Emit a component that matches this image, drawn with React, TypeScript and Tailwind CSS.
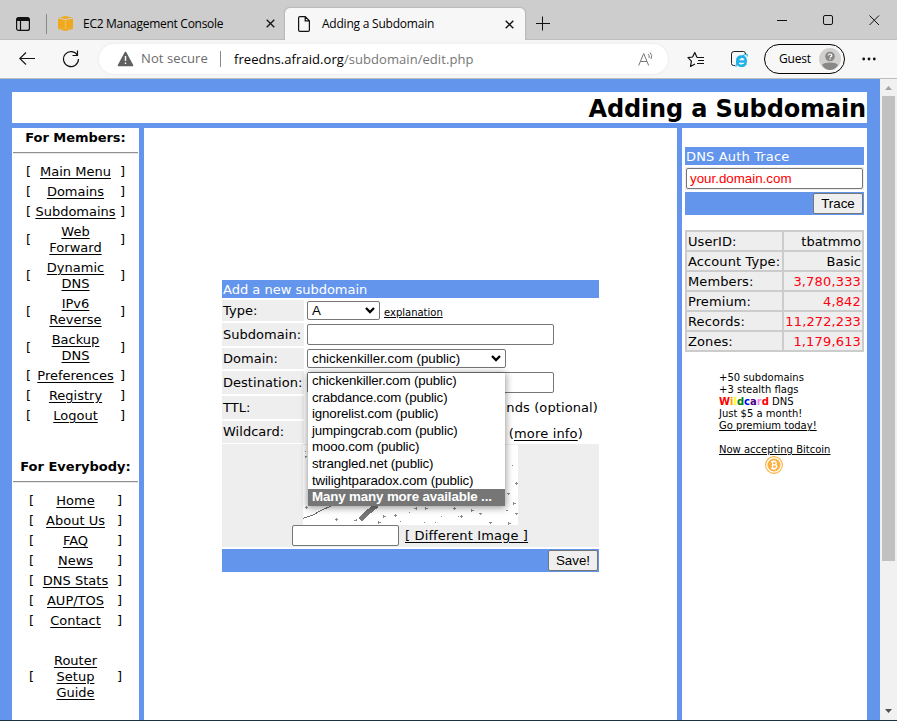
import React from "react";

type Entry = { lines: string[]; height: string };

const members: Entry[] = [
  { lines: ["Main Menu"], height: "h-[20px]" },
  { lines: ["Domains"], height: "h-[20px]" },
  { lines: ["Subdomains"], height: "h-[20px]" },
  { lines: ["Web", "Forward"], height: "h-[36px]" },
  { lines: ["Dynamic", "DNS"], height: "h-[36px]" },
  { lines: ["IPv6", "Reverse"], height: "h-[36px]" },
  { lines: ["Backup", "DNS"], height: "h-[36px]" },
  { lines: ["Preferences"], height: "h-[20px]" },
  { lines: ["Registry"], height: "h-[20px]" },
  { lines: ["Logout"], height: "h-[20px]" },
];

const everybody: Entry[] = [
  { lines: ["Home"], height: "h-[20px]" },
  { lines: ["About Us"], height: "h-[20px]" },
  { lines: ["FAQ"], height: "h-[20px]" },
  { lines: ["News"], height: "h-[20px]" },
  { lines: ["DNS Stats"], height: "h-[20px]" },
  { lines: ["AUP/TOS"], height: "h-[20px]" },
  { lines: ["Contact"], height: "h-[20px]" },
  { lines: ["Router", "Setup", "Guide"], height: "h-[52px] mt-[20px]" },
];

const stats: [string, string, string][] = [
  ["UserID:", "tbatmmo", "text-black"],
  ["Account Type:", "Basic", "text-black"],
  ["Members:", "3,780,333", "text-[#ff0010] tracking-[0.16px]"],
  ["Premium:", "4,842", "text-[#ff0010] tracking-[0.16px]"],
  ["Records:", "11,272,233", "text-[#ff0010] tracking-[0.12px]"],
  ["Zones:", "1,179,613", "text-[#ff0010] tracking-[0.16px]"],
];

const options = [
  "chickenkiller.com (public)",
  "crabdance.com (public)",
  "ignorelist.com (public)",
  "jumpingcrab.com (public)",
  "mooo.com (public)",
  "strangled.net (public)",
  "twilightparadox.com (public)",
];

function Menu({ entries, width }: { entries: Entry[]; width: string }) {
  return (
    <div className={`mx-auto ${width}`}>
      {entries.map((e) => (
        <div key={e.lines[0]} className={`flex items-center justify-between ${e.height}`}>
          <span>[</span>
          <span className="flex flex-col items-center underline underline-offset-2">
            {e.lines.map((l) => (
              <span key={l} className="h-[16px] leading-[16px]">{l}</span>
            ))}
          </span>
          <span>]</span>
        </div>
      ))}
    </div>
  );
}

function Rule() {
  return <div className="mx-[1px] h-[2px] border-t border-[#8f8f8f] bg-[#e8e8e8]" />;
}

function Chevron() {
  return (
    <svg width="10" height="7" viewBox="0 0 10 7" fill="none" stroke="#000" strokeWidth="2.3">
      <path d="M1 1L5 5L9 1" />
    </svg>
  );
}

function Field({ label, height, children }: { label: string; height: string; children?: React.ReactNode }) {
  return (
    <div className={`flex gap-[3px] ${height}`}>
      <div className="flex w-[82px] items-center bg-[#eee] pl-[1px] tracking-[0.03px]">{label}</div>
      <div className="flex flex-1 items-center">{children}</div>
    </div>
  );
}

function TabBar() {
  return (
    <div className="flex h-[40px] bg-[#cdcdcd] font-['Open_Sans',sans-serif] text-[12px]">
      <div className="flex w-[285px] items-center border-b border-[#bdbdbd] pt-[8px] pl-[16px]">
        <svg width="14" height="14" viewBox="0 0 14 14" fill="none" stroke="#111">
          <rect x=".6" y=".6" width="12.8" height="12.8" rx="2" strokeWidth="1.2" />
          <path d="M1 2.4H13" strokeWidth="3.2" />
          <path d="M4.5 3V13" strokeWidth="1.2" />
        </svg>
        <div className="ml-[16px] h-[20px] w-px bg-[#888]" />
        <svg className="ml-[11px]" width="15" height="15" viewBox="0 0 15 15">
          <path d="M0 2.6L7 4V12L0 13Z" fill="#f0a91d" />
          <path d="M15 2.6L8 4V12L15 13Z" fill="#f0a91d" />
          <path d="M1 1.6L7.5 0L14 1.6L7.5 3Z" fill="#f0a91d" />
          <path d="M0 13L7.5 12L15 13L7.5 15Z" fill="#f0a91d" />
          <path d="M6.8 3.5H8.2V12.5H6.8Z" fill="#f5bd50" />
        </svg>
        <span className="ml-[10px] w-[150px] whitespace-nowrap tracking-[-0.28px]">EC2 Management Console</span>
        <svg className="ml-[33px]" width="9" height="9" viewBox="0 0 9 9" stroke="#111" strokeWidth="1.3">
          <path d="M.7.7L8.3 8.3M8.3.7L.7 8.3" />
        </svg>
      </div>
      <div className="mt-[8px] flex h-[32px] w-[240px] items-center rounded-t-[5px] bg-[#f7f7f7] pl-[13px] shadow-[0_0_2px_#888]">
        <svg width="12" height="16" viewBox="0 0 12 16" fill="none" stroke="#111" strokeWidth="1.2">
          <path d="M2 .6H7.2L11.4 4.8V14Q11.4 15.4 10 15.4H2Q.6 15.4 .6 14V2Q.6 .6 2 .6ZM7.2 .6V4.8H11.4" />
        </svg>
        <span className="ml-[12px] w-[130px] whitespace-nowrap tracking-[-0.22px]">Adding a Subdomain</span>
        <svg className="ml-[53px]" width="9" height="9" viewBox="0 0 9 9" stroke="#111" strokeWidth="1.3">
          <path d="M.7.7L8.3 8.3M8.3.7L.7 8.3" />
        </svg>
      </div>
      <div className="flex flex-1 border-b border-[#bdbdbd]">
        <svg className="mt-[16px] ml-[11px]" width="14" height="15" viewBox="0 0 14 15" stroke="#111" strokeWidth="1">
          <path d="M0 7.5H14M6.5 .5V14.5" />
        </svg>
        <svg className="mt-[15px] ml-[227px]" width="56" height="11" viewBox="0 0 56 11" fill="none" stroke="#111">
          <path d="M0 5.5H10" />
          <rect x="46.5" y=".5" width="9" height="9" rx="1.5" />
        </svg>
        <svg className="mt-[15px] ml-[36px]" width="11" height="11" viewBox="0 0 11 11" stroke="#111">
          <path d="M.5 .5L10 10M10 .5L.5 10" />
        </svg>
      </div>
    </div>
  );
}

function Toolbar() {
  return (
    <div className="flex h-[39px] items-center border-b border-[#bdbdbd] bg-[#f7f7f7] font-['Open_Sans',sans-serif] text-[13px]">
      <svg className="ml-[19px]" width="16" height="14" viewBox="0 0 16 14" fill="none" stroke="#111" strokeWidth="1.1">
        <path d="M7 .5L.8 6.5L7 12.5M.8 6.5H16" />
      </svg>
      <svg className="ml-[27px]" width="18" height="18" viewBox="0 0 18 18" fill="none" stroke="#111" strokeWidth="1.2">
        <path d="M15.6 5.5A7.5 7.5 0 1 0 16.5 9M15.5 .5V5.5H10.5" />
      </svg>
      <div className="ml-[19px] flex h-[30px] w-[569px] items-center rounded-full bg-white pl-[18px] shadow-[0_0_3px_#e4e4e4]">
        <svg width="17" height="16" viewBox="0 0 17 16">
          <path d="M8.5 1.5L15.5 14.5H1.5Z" fill="#606060" stroke="#606060" strokeWidth="1.6" strokeLinejoin="round" />
          <path d="M8.5 5V10M8.5 11.5V13" stroke="#fff" strokeWidth="1.4" />
        </svg>
        <span className="ml-[7px] w-[67px] whitespace-nowrap tracking-[0.1px] text-[#6b6b6b]">Not secure</span>
        <div className="ml-[12px] h-[16px] w-px bg-[#888]" />
        <span className="ml-[13px] w-[241px] pt-[1px] whitespace-nowrap tracking-[0.06px] text-[#767676]"><span className="text-black">freedns.afraid.org</span>/subdomain/edit.php</span>
        <svg className="ml-[163px]" width="16" height="15" viewBox="0 0 16 15" fill="none" stroke="#777">
          <path d="M.7 13.5L5.7 1.5L10.7 13.5M2.5 9.5H9M10 2Q12 3.5 11 6M12 .5Q15 3.5 13 7" />
        </svg>
      </div>
      <svg className="ml-[19px]" width="17" height="17" viewBox="0 0 17 17" fill="none" stroke="#111" strokeWidth="1.2" strokeLinejoin="round">
        <path d="M10 6.5L7.8 1.5L5.6 6L1 6.7L4.4 10.2L3.5 15.5L8 13M10 6.5H17M11 9.5H17M10 12.5H17" />
      </svg>
      <svg className="ml-[27px]" width="17" height="17" viewBox="0 0 17 17" fill="none">
        <path d="M4 14.5H2.7Q.5 14.5 .5 12.5V3Q.5 .5 3 .5H12.5Q14.5 .5 14.5 3" stroke="#222" />
        <path d="M14.8 12Q13.8 14.8 10.4 14.8Q6.2 14.8 6.2 10.2Q6.2 5.6 10.4 5.6Q14.8 5.6 14.8 10.4H7" stroke="#1fb2ea" strokeWidth="2.5" />
        <path d="M5 16Q4.5 10 13 4Q17 2 16 5.5" stroke="#1fb2ea" strokeWidth="1.2" />
      </svg>
      <div className="ml-[16px] flex h-[30px] w-[81px] items-center rounded-full border border-black pl-[14px]">
        <span className="w-[33px] whitespace-nowrap text-[12px] tracking-[-0.2px]">Guest</span>
        <svg className="ml-[7px]" width="22" height="22" viewBox="0 0 22 22">
          <circle cx="11" cy="11" r="11" fill="#d2d0ce" />
          <path d="M3 17Q4 14.5 11 14.5Q18 14.5 19 17Q16 22 11 22Q6 22 3 17Z" fill="#8a8886" />
          <circle cx="11" cy="8.5" r="4.8" fill="#8a8886" />
          <path d="M9.2 7.4Q9.5 6 11 6Q12.8 6 12.8 7.5Q12.8 8.3 11 9.3M11 10.3V11.5" fill="none" stroke="#fff" strokeWidth="1.2" />
        </svg>
      </div>
      <svg className="ml-[17px]" width="14" height="4" viewBox="0 0 14 4" fill="#111">
        <circle cx="1.7" cy="2" r="1.4" /><circle cx="7" cy="2" r="1.4" /><circle cx="12.3" cy="2" r="1.4" />
      </svg>
    </div>
  );
}

function Captcha() {
  return (
    <svg className="ml-[81px] block" width="215" height="80" viewBox="0 0 215 80" shapeRendering="crispEdges">
      <rect width="215" height="80" fill="#fff" />
      <g fill="none" stroke="#6e6e6e">
        <path d="M0 73.5L10 70L18 65.5L28 61" />
        <path d="M57 75L64 68L74 60" stroke="#777" strokeWidth="5" />
        <path
          stroke="#8a8a8a"
          d="M2 6.5H3M2 11.5H4M2.5 11V13M2 62.5H5M3.5 61V64M32 74.5H35M33.5 73V76M51 75.5H54M53.5 74V76M75 77.5H78M75.5 76V79M80 71.5H83M80.5 70V73M91 70.5H94M92.5 69V72M97 76.5H98M106 67.5H107M111 63.5H114M113.5 62V65M121 77.5H122M132 77.5H133M138 71.5H139M122 63.5H125M122.5 62V65M150 63.5H153M151.5 62V65M157 71.5H160M158.5 70V73M155 71.5H156M168 65.5H171M168.5 64V67M176 68.5H179M177.5 68V70M186 77.5H189M187.5 77V79M205 78.5H208M205.5 77V80M210 58.5H213M210.5 57V60M204 48.5H207M205.5 48V50M212 38.5H215M213.5 37V40M209 20.5H210M212 68.5H215M213.5 68V70M203 65.5H205"
        />
      </g>
    </svg>
  );
}

function SubdomainForm() {
  return (
    <div className="relative ml-[78px] mt-[152px] flex w-[377px] flex-col gap-[2px]">
      <div className="h-[18px] bg-[#6495ed] pl-[1px] leading-[20px] text-white">Add a new subdomain</div>
      <Field label="Type:" height="h-[21px]">
        <div className="flex h-[19px] w-[73px] items-center justify-between rounded-[2px] border border-[#767676] bg-white pr-[4px] pl-[4px] font-['Liberation_Sans',sans-serif] text-[13.33px]">A<Chevron /></div>
        <span className="mt-[3px] ml-[4px] text-[10px] underline">explanation</span>
      </Field>
      <Field label="Subdomain:" height="h-[23px]">
        <div className="h-[21px] w-[247px] rounded-[2px] border border-[#767676]" />
      </Field>
      <Field label="Domain:" height="h-[21px]">
        <div className="flex h-[19px] w-[199px] items-center justify-between rounded-[2px] border border-[#767676] bg-white pr-[4px] pl-[4px] font-['Liberation_Sans',sans-serif] text-[13.33px]">chickenkiller.com (public)<Chevron /></div>
      </Field>
      <Field label="Destination:" height="h-[23px]">
        <div className="h-[21px] w-[247px] rounded-[2px] border border-[#767676]" />
      </Field>
      <Field label="TTL:" height="h-[23px]">
        <span className="mr-[1px] ml-auto whitespace-nowrap tracking-[0.1px]">nds (optional)</span>
      </Field>
      <Field label="Wildcard:" height="h-[22px]">
        <span className="mt-[4px] mr-[16px] ml-auto tracking-[0.18px] whitespace-nowrap">(<span className="underline underline-offset-2">more info</span>)</span>
      </Field>
      <div className="mt-[-1px] h-[103px] bg-[#eee] pt-[1px]">
        <Captcha />
        <div className="ml-[70px] flex h-[21px] items-center">
          <div className="h-[21px] w-[107px] rounded-[2px] border border-[#767676] bg-white" />
          <span className="ml-[6px] tracking-[0.14px] underline underline-offset-2">[ Different Image ]</span>
        </div>
      </div>
      <div className="flex h-[23px] items-center justify-end bg-[#6495ed] pr-[1px]">
        <button className="h-[21px] w-[50px] rounded-[2px] border border-[#767676] bg-[#efefef] font-['Liberation_Sans',sans-serif] text-[13.33px] leading-[18px]">Save!</button>
      </div>
      <div className="absolute top-[93px] left-[86px] w-[197px] bg-white font-['Liberation_Sans',sans-serif] text-[13.33px] tracking-[-0.14px] shadow-[0_1px_7px_1px_rgba(0,0,0,0.4)]">
        {options.map((o) => (
          <div key={o} className="h-[16.6px] pl-[4px] leading-[16px] whitespace-nowrap">{o}</div>
        ))}
        <div className="h-[17px] bg-[#767676] pl-[4px] leading-[16px] font-bold whitespace-nowrap text-white">Many many more available ...</div>
      </div>
    </div>
  );
}

function Sidebar() {
  return (
    <div className="flex w-[185px] flex-col bg-white pt-[19px] pl-[3px]">
      <div className="w-[179px]">
        <div className="h-[18px] bg-[#6495ed] pl-[1px] leading-[20px] tracking-[0.16px] text-white">DNS Auth Trace</div>
        <div className="mt-[2px] h-[23px] bg-[#eee] p-[1px]">
          <div className="h-[21px] rounded-[2px] border border-[#767676] bg-white pl-[3px] font-['Liberation_Sans',sans-serif] text-[13.33px] leading-[19px] text-[#ff0000]">your.domain.com</div>
        </div>
        <div className="mt-[2px] flex h-[23px] items-center justify-end bg-[#6495ed] pr-[1px]">
          <button className="h-[21px] w-[50px] rounded-[2px] border border-[#767676] bg-[#efefef] font-['Liberation_Sans',sans-serif] text-[13.33px] leading-[18px]">Trace</button>
        </div>
        <div className="mt-[15px] flex flex-col gap-[2px] bg-[#ccc] p-[2px]">
          {stats.map(([k, v, color]) => (
            <div key={k} className="flex h-[18px] gap-[2px] leading-[20px] whitespace-nowrap">
              <div className="w-[95px] bg-[#eee] pl-[1px] tracking-[0.1px]">{k}</div>
              <div className={`flex w-[78px] justify-end bg-[#eee] pr-[1px] ${color}`}>{v}</div>
            </div>
          ))}
        </div>
      </div>
      <div className="mt-[20px] ml-[34px] w-[111px] text-[10px] leading-[12px] whitespace-nowrap">
        <div>+50 subdomains</div>
        <div>+3 stealth flags</div>
        <div>
          <b><span className="text-[#ff0000]">W</span><span className="text-[#ffa500]">i</span><span className="text-[#ffff00]">l</span><span className="text-[#008000]">d</span><span className="text-[#0000ff]">c</span><span className="text-[#4b0082]">a</span><span className="text-[#ee82ee]">r</span><span className="text-[#ff0000]">d</span></b> DNS
        </div>
        <div>Just $5 a month!</div>
        <div className="underline">Go premium today!</div>
        <div className="mt-[12px] underline">Now accepting Bitcoin</div>
        <svg className="ml-[46px]" width="18" height="18" viewBox="0 0 18 18">
          <circle cx="9" cy="9" r="8.4" fill="#fff" stroke="#fbb040" strokeWidth="1.1" />
          <circle cx="9" cy="9" r="6.5" fill="#fbb040" />
          <path d="M7.5 5.5V12.5M6 5.7H9.5Q11.3 5.7 11.3 7.3Q11.3 8.8 9.5 8.8H7M9.5 8.8Q11.8 8.8 11.8 10.5Q11.8 12.3 9.5 12.3H6M8.2 4.3V5.7M10 4.3V5.7M8.2 12.3V13.7M10 12.3V13.7" fill="none" stroke="#fff" strokeWidth="1.3" />
        </svg>
      </div>
    </div>
  );
}

export default function App() {
  return (
    <div className="flex h-[721px] w-[897px] flex-col overflow-hidden border-b border-[#18323f] text-black">
      <TabBar />
      <Toolbar />
      <div className="flex h-[641px]">
        <div className="flex w-[880px] flex-col bg-[#6495ed] pt-[13px] pr-[13px] pl-[12px] font-['DejaVu_Sans',sans-serif] text-[13px]">
          <h1 className="h-[31px] bg-white pr-[1px] text-right text-[24px] leading-[34px] font-bold tracking-[-0.14px] whitespace-nowrap">Adding a Subdomain</h1>
          <div className="mt-[5px] flex h-[592px] gap-[5px]">
            <div className="w-[127px] bg-white">
              <div className="h-[24px] pt-[2px] text-center leading-[16px] font-bold tracking-[-0.05px]">For Members:</div>
              <Rule />
              <div className="h-[8px]" />
              <Menu entries={members} width="w-[99px]" />
              <div className="h-[55px] pt-[33px] text-center leading-[16px] font-bold">For Everybody:</div>
              <Rule />
              <div className="h-[8px]" />
              <Menu entries={everybody} width="w-[93px]" />
            </div>
            <div className="w-[533px] bg-white"><SubdomainForm /></div>
            <Sidebar />
          </div>
        </div>
        <div className="flex w-[17px] flex-col items-center justify-between bg-[#f1f1f1]">
          <svg className="mt-[7px]" width="7" height="4" viewBox="0 0 7 4"><path d="M0 4L3.5 0L7 4Z" fill="#a3a3a3" /></svg>
          <div className="mt-[6px] mb-auto h-[465px] w-[13px] bg-[#c1c1c1]" />
          <svg className="mb-[7px]" width="7" height="4" viewBox="0 0 7 4"><path d="M0 0L3.5 4L7 0Z" fill="#505050" /></svg>
        </div>
      </div>
    </div>
  );
}
